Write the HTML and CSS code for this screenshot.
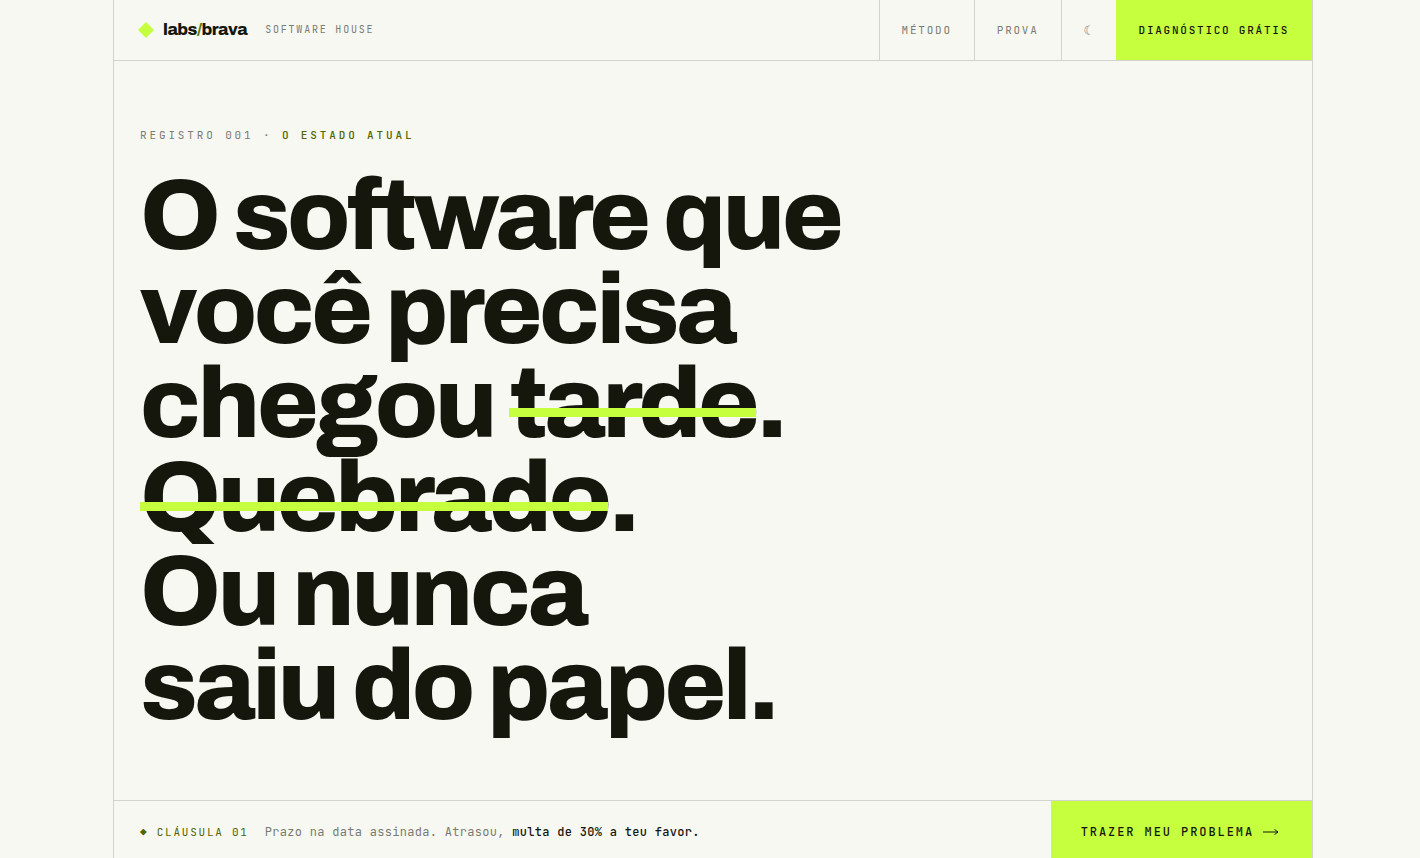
FILE: index.html
```html
<!DOCTYPE html>
<html lang="pt-BR">
<head>
    <meta charset="UTF-8">
    <meta name="viewport" content="width=device-width, initial-scale=1.0">
    <title>labs/brava</title>
    <link rel="stylesheet" href="styles.css">
</head>
<body>
    <div class="page">
        <header class="topbar">
            <a class="brand" href="#">
                <svg class="brand-mark" viewBox="0 0 16 16" aria-hidden="true"><path d="M8 0 16 8 8 16 0 8Z"/></svg>
                <span class="brand-name">labs<span class="slash">/</span>brava</span>
                <span class="brand-tag">SOFTWARE HOUSE</span>
            </a>
            <nav class="nav">
                <a class="nav-item" href="#metodo">MÉTODO</a>
                <a class="nav-item" href="#prova">PROVA</a>
                <button class="nav-item theme-toggle" type="button" aria-label="Tema">☾</button>
                <a class="nav-item nav-cta" href="#diagnostico">DIAGNÓSTICO GRÁTIS</a>
            </nav>
        </header>

        <main class="hero">
            <p class="eyebrow">REGISTRO 001 · <b>O ESTADO ATUAL</b></p>
            <h1>O software que<br>você precisa<br>chegou <span class="strike">tarde</span>.<br><span class="strike">Quebrado</span>.<br>Ou nunca<br>saiu do papel.</h1>
        </main>

        <section class="clause">
            <p class="clause-text">
                <span class="clause-label">◆ CLÁUSULA 01</span>
                <span>Prazo na data assinada. Atrasou, <b>multa de 30% a teu favor.</b></span>
            </p>
            <a class="clause-cta" href="#diagnostico">
                <span>TRAZER MEU PROBLEMA</span>
                <svg class="arrow" viewBox="0 0 16 8" aria-hidden="true"><path d="M0 4H14.5M11.5 1.5L15 4L11.5 6.5"/></svg>
            </a>
        </section>
    </div>
</body>
</html>
```
FILE: styles.css
```css
* {
    margin: 0;
    padding: 0;
    box-sizing: border-box;
}

:root {
    --paper: #f7f8f2;
    --ink: #15170d;
    --muted: #7a7c74;
    --line: #d2d4cc;
    --lime: #c6ff3d;
    --olive: #526600;
    --mono: "JetBrains Mono", "DejaVu Sans Mono", monospace;
    --sans: Archivo, Inter, sans-serif;
}

body {
    padding-left: 6px;
    font-family: var(--mono);
    font-size: 12px;
    color: var(--ink);
    background-color: var(--paper);
}

a {
    color: inherit;
    text-decoration: none;
}

.page {
    max-width: 1200px;
    min-height: 100vh;
    margin: 0 auto;
    border-left: 1px solid var(--line);
    border-right: 1px solid var(--line);
}

.topbar {
    display: flex;
    justify-content: space-between;
    height: 61px;
    border-bottom: 1px solid var(--line);
}

.brand {
    display: flex;
    align-items: center;
    padding-left: 24px;
    padding-bottom: 1px;
}

.brand-mark {
    width: 16px;
    height: 16px;
    margin-right: 9px;
    fill: var(--lime);
}

.brand-name {
    margin-right: 18px;
    font-family: var(--sans);
    font-size: 17px;
    font-weight: 800;
    letter-spacing: -0.03em;
}

.slash {
    color: #5f7800;
}

.brand-tag {
    font-size: 10px;
    letter-spacing: 0.18em;
    color: var(--muted);
}

.nav {
    display: flex;
}

.nav-item {
    display: flex;
    align-items: center;
    padding: 0 22px;
    border: 0;
    border-left: 1px solid var(--line);
    background: none;
    font-family: var(--mono);
    font-size: 11px;
    letter-spacing: 0.16em;
    color: var(--muted);
    cursor: pointer;
}

.theme-toggle {
    font-size: 13px;
}

.nav-cta {
    padding-right: 23px;
    border-left-color: var(--lime);
    background-color: var(--lime);
    font-weight: 500;
    color: var(--ink);
}

.hero {
    padding: 66px 26px 67px;
}

.eyebrow {
    margin-bottom: 26px;
    font-size: 11px;
    line-height: 16px;
    letter-spacing: 0.26em;
    color: var(--muted);
}

.eyebrow b {
    font-weight: 500;
    color: var(--olive);
}

h1 {
    font-family: var(--sans);
    font-size: 100px;
    font-weight: 800;
    line-height: 94px;
    letter-spacing: -0.036em;
}

.strike {
    position: relative;
}

.strike::after {
    content: "";
    position: absolute;
    left: 0;
    right: 0;
    top: 54%;
    height: 9px;
    background-color: var(--lime);
}

.clause {
    display: flex;
    justify-content: space-between;
    height: 63px;
    border-top: 1px solid var(--line);
}

.clause-text {
    display: flex;
    align-items: center;
    gap: 16px;
    padding-left: 26px;
    letter-spacing: 0.025em;
    color: var(--muted);
}

.clause-text b {
    font-weight: 500;
    color: var(--ink);
}

.clause-label {
    font-size: 11px;
    letter-spacing: 0.16em;
    color: var(--olive);
}

.clause-cta {
    display: flex;
    align-items: center;
    gap: 9px;
    padding: 0 33px 0 30px;
    background-color: var(--lime);
    font-weight: 500;
    letter-spacing: 0.16em;
}

.arrow {
    width: 16px;
    height: 8px;
    fill: none;
    stroke: var(--ink);
    stroke-width: 1;
}
```
